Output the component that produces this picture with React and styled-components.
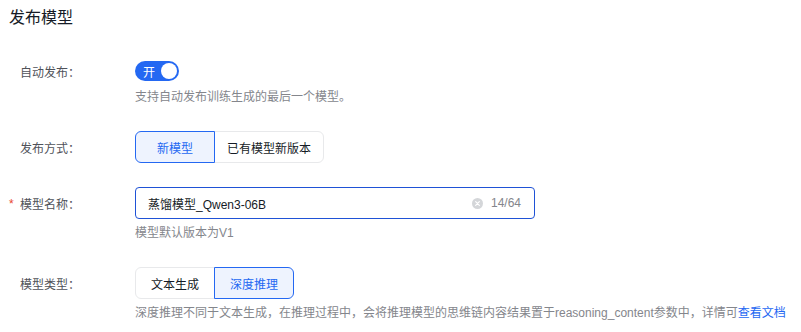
import React from "react";
import styled, { createGlobalStyle } from "styled-components";

const Global = createGlobalStyle`
  html, body { margin: 0; padding: 0; background: #fff; }
  body { font-family: "Liberation Sans", "Noto Sans CJK SC", sans-serif; font-size: 12px; color: #151b26; }
`;

const Page = styled.div`
  padding: 8px 0 0 9px;
  width: 801px;
  box-sizing: border-box;
`;

const Title = styled.h2`
  margin: 0 0 31px 0;
  font-size: 16px;
  font-weight: 400;
  line-height: 20px;
  color: #151b26;
`;

const Item = styled.div`
  display: grid;
  grid-template-columns: 126px 1fr;
  margin-bottom: 24px;
`;

const Label = styled.div`
  position: relative;
  padding-left: 11px;
  height: ${(p) => p.$h}px;
  display: flex;
  align-items: center;
  color: #4f5259;
  font-size: 12px;
`;

const Required = styled.span`
  position: absolute;
  left: 0;
  top: 50%;
  transform: translateY(-45%);
  color: #e8452e;
  font-size: 12px;
`;

const Control = styled.div`
  display: flex;
  flex-direction: column;
  align-items: flex-start;
`;

const ControlLine = styled.div`
  height: ${(p) => p.$h}px;
  display: flex;
  align-items: center;
`;

const Help = styled.div`
  margin-top: 4px;
  line-height: 20px;
  color: #84868c;
  font-size: 12px;
  white-space: nowrap;
`;

const Link = styled.a`
  color: #2468f2;
  text-decoration: none;
`;

const Switch = styled.div`
  width: 44px;
  height: 20px;
  border-radius: 10px;
  background: #2468f2;
  box-sizing: border-box;
  padding: 0 2px 0 8px;
  display: flex;
  align-items: center;
  justify-content: space-between;
  color: #fff;
  font-size: 12px;
`;

const Knob = styled.span`
  width: 16px;
  height: 16px;
  border-radius: 50%;
  background: #fff;
`;

const Segmented = styled.div`
  display: flex;
`;

const Seg = styled.button`
  min-width: 80px;
  height: 32px;
  padding: 0 12px;
  box-sizing: border-box;
  font-family: inherit;
  font-size: 12px;
  cursor: pointer;
  border: 1px solid ${(p) => (p.$active ? "#2468f2" : "#e8e9eb")};
  background: ${(p) => (p.$active ? "#eef3fe" : "#fff")};
  color: ${(p) => (p.$active ? "#2468f2" : "#151b26")};
  position: relative;
  z-index: ${(p) => (p.$active ? 1 : 0)};
  margin-left: -1px;
  &:first-child { margin-left: 0; border-radius: 6px 0 0 6px; }
  &:last-child { border-radius: 0 6px 6px 0; }
`;

const Input = styled.div`
  width: 400px;
  height: 32px;
  box-sizing: border-box;
  border: 1px solid #1f52d6;
  border-radius: 4px;
  display: flex;
  align-items: center;
  padding: 0 13px 0 12px;
`;

const InputText = styled.span`
  flex: 1;
  color: #151b26;
  font-size: 12px;
`;

const Suffix = styled.span`
  display: flex;
  align-items: center;
  gap: 8px;
  color: #84868c;
  font-size: 12px;
`;

const ClearIcon = () => (
  <svg width="11" height="11" viewBox="0 0 12 12">
    <circle cx="6" cy="6" r="6" fill="#d4d6d9" />
    <path d="M4 4 L8 8 M8 4 L4 8" stroke="#fff" strokeWidth="1.3" strokeLinecap="round" />
  </svg>
);

export default function App() {
  return (
    <Page>
      <Global />
      <Title>发布模型</Title>

      <Item>
        <Label $h={24}>自动发布：</Label>
        <Control>
          <ControlLine $h={24}>
            <Switch>
              开<Knob />
            </Switch>
          </ControlLine>
          <Help>支持自动发布训练生成的最后一个模型。</Help>
        </Control>
      </Item>

      <Item>
        <Label $h={32}>发布方式：</Label>
        <Control>
          <Segmented>
            <Seg $active>新模型</Seg>
            <Seg>已有模型新版本</Seg>
          </Segmented>
        </Control>
      </Item>

      <Item>
        <Label $h={32}>
          <Required>*</Required>模型名称：
        </Label>
        <Control>
          <Input>
            <InputText>蒸馏模型_Qwen3-06B</InputText>
            <Suffix>
              <ClearIcon />
              14/64
            </Suffix>
          </Input>
          <Help>模型默认版本为V1</Help>
        </Control>
      </Item>

      <Item>
        <Label $h={32}>模型类型：</Label>
        <Control>
          <Segmented>
            <Seg>文本生成</Seg>
            <Seg $active>深度推理</Seg>
          </Segmented>
          <Help>
            深度推理不同于文本生成，在推理过程中，会将推理模型的思维链内容结果置于reasoning_content参数中，详情可
            <Link href="#">查看文档</Link>
          </Help>
        </Control>
      </Item>
    </Page>
  );
}
